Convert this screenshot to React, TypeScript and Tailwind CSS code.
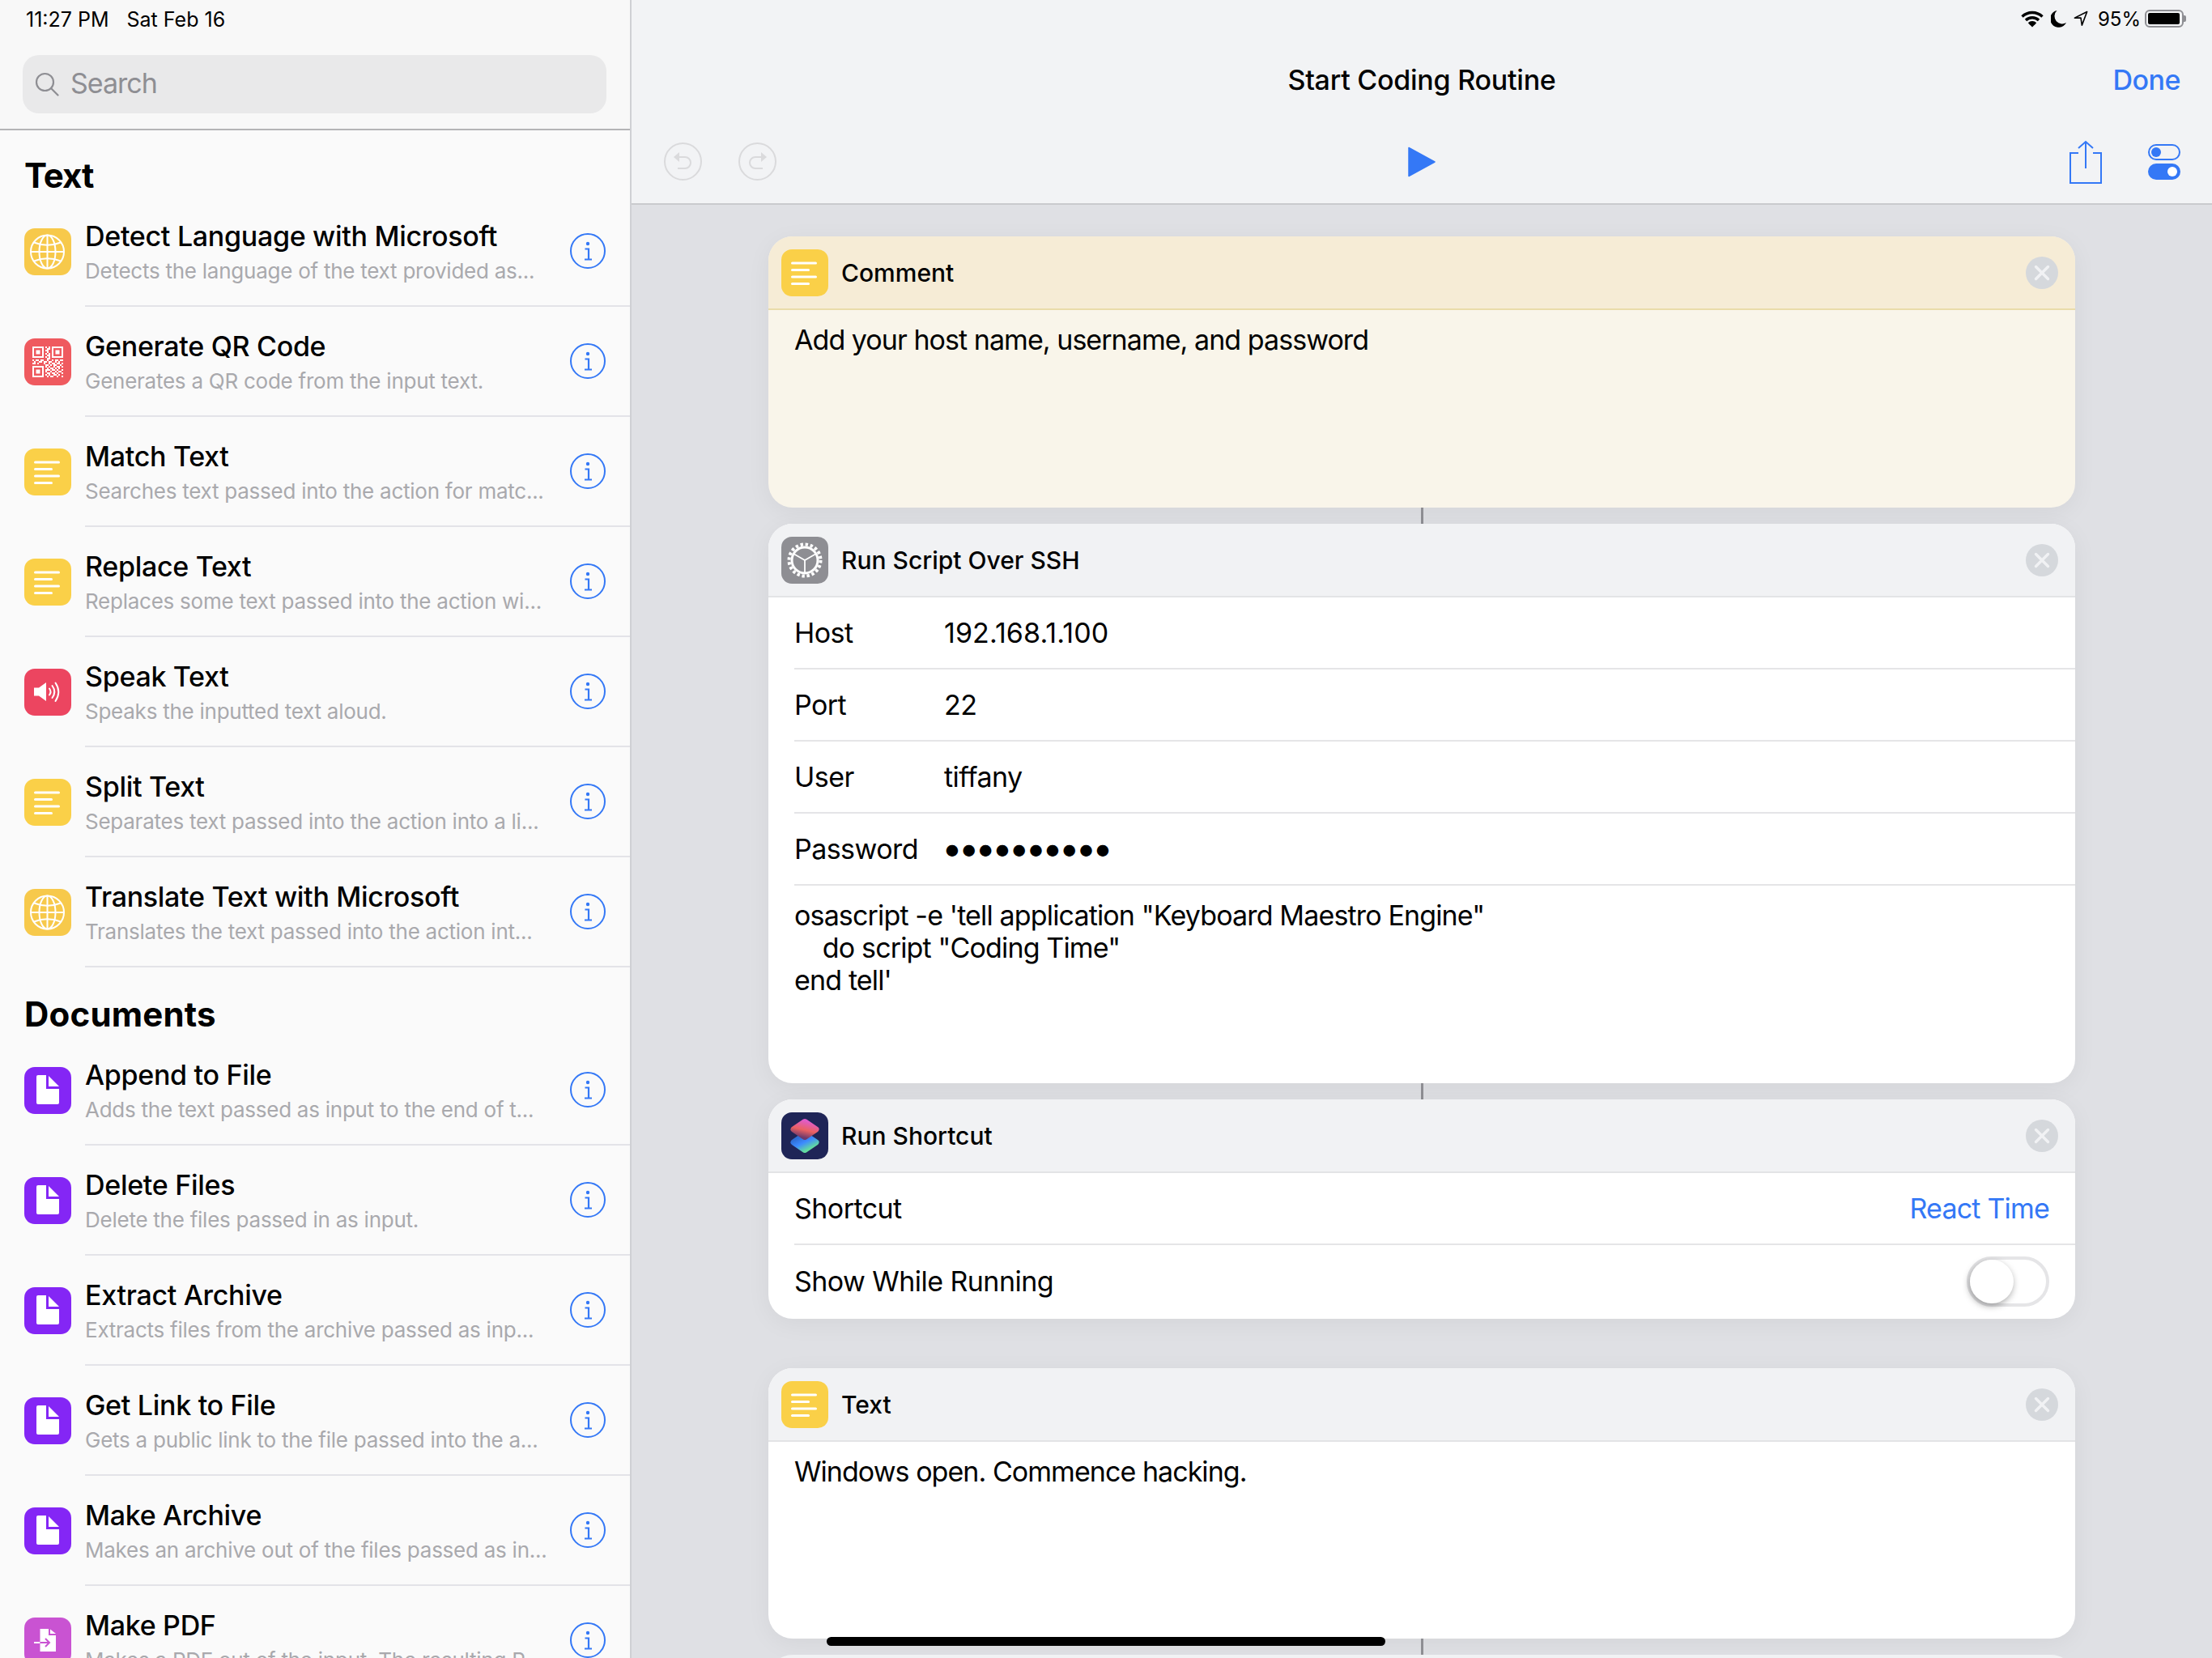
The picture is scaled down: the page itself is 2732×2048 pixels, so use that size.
import React from 'react';

type IconKind = 'globe' | 'qr' | 'lines' | 'speaker' | 'doc' | 'pdf';

const textActions: { title: string; sub: string; icon: IconKind }[] = [
  { title: 'Detect Language with Microsoft', sub: 'Detects the language of the text provided as...', icon: 'globe' },
  { title: 'Generate QR Code', sub: 'Generates a QR code from the input text.', icon: 'qr' },
  { title: 'Match Text', sub: 'Searches text passed into the action for matc...', icon: 'lines' },
  { title: 'Replace Text', sub: 'Replaces some text passed into the action wi...', icon: 'lines' },
  { title: 'Speak Text', sub: 'Speaks the inputted text aloud.', icon: 'speaker' },
  { title: 'Split Text', sub: 'Separates text passed into the action into a li...', icon: 'lines' },
  { title: 'Translate Text with Microsoft', sub: 'Translates the text passed into the action int...', icon: 'globe' },
];

const docActions: { title: string; sub: string; icon: IconKind }[] = [
  { title: 'Append to File', sub: 'Adds the text passed as input to the end of t...', icon: 'doc' },
  { title: 'Delete Files', sub: 'Delete the files passed in as input.', icon: 'doc' },
  { title: 'Extract Archive', sub: 'Extracts files from the archive passed as inp...', icon: 'doc' },
  { title: 'Get Link to File', sub: 'Gets a public link to the file passed into the a...', icon: 'doc' },
  { title: 'Make Archive', sub: 'Makes an archive out of the files passed as in...', icon: 'doc' },
  { title: 'Make PDF', sub: 'Makes a PDF out of the input. The resulting P...', icon: 'pdf' },
];

const qrRows = [
  '0000000010100000000',
  '0000000001100000000',
  '0000000011000000000',
  '0000000001000000000',
  '0000000010100000000',
  '0000000001100000000',
  '0000000010100000000',
  '0000000001100000000',
  '1011011001001011011',
  '0100110110110010100',
  '1101000100101101101',
  '0000000011010110010',
  '0000000010100101101',
  '0000000001011010100',
  '0000000011101101001',
  '0000000010010010110',
  '0000000001101101001',
  '0000000010100110100',
  '0000000001011001001',
];

const Frame: React.FC<{ className: string; children: React.ReactNode }> = ({ className, children }) => (
  <div className={'w-[58px] h-[58px] rounded-[13px] shrink-0 ' + className}>
    <svg viewBox="0 0 58 58" className="w-full h-full block">
      {children}
    </svg>
  </div>
);

const LinesIcon = () => (
  <Frame className="bg-[#fad048]">
    <g stroke="#fff" strokeWidth="3" strokeLinecap="round">
      <path d="M13.500 17H42.500" />
      <path d="M13.500 25.500H33.500" />
      <path d="M13.500 34H42.500" />
      <path d="M13.500 42.500H33.500" />
    </g>
  </Frame>
);

const GlobeIcon = () => (
  <Frame className="bg-[#f7c94b]">
    <g fill="none" stroke="#fff" strokeWidth="2">
      <circle cx="28.500" cy="29" r="20.500" />
      <ellipse cx="28.500" cy="29" rx="10" ry="20.500" />
      <path d="M28.500 8.500V49.500M8 29H49" />
      <path d="M12 17.500Q28.500 24 45 17.500M12 40.500Q28.500 34 45 40.500" />
    </g>
  </Frame>
);

const QrIcon = () => (
  <Frame className="bg-[#ef5a5f]">
    <g fill="#fff">
      {qrRows.map((row, y) =>
        row.split('').map((cell, x) =>
          cell === '0' ? null : <rect key={x + '-' + y} x={10 + x * 2} y={10 + y * 2} width="2" height="2" />
        )
      )}
      <path d="M10 10h14v14H10zM12 12v10h10V12zM34 10h14v14H34zM36 12v10h10V12zM10 34h14v14H10zM12 36v10h10V36z" fillRule="evenodd" />
      <path d="M14.500 14.500h5v5h-5zM38.500 14.500h5v5h-5zM14.500 38.500h5v5h-5z" />
    </g>
  </Frame>
);

const SpeakerIcon = () => (
  <Frame className="bg-[#ec4560]">
    <path d="M12 23.500H18L27 17V40L18 33.500H12Z" fill="#fff" />
    <g fill="none" stroke="#fff" strokeWidth="2" strokeLinecap="round">
      <path d="M31 24.500Q34 28.500 31 32.500" />
      <path d="M34.500 21Q40 28.500 34.500 36" />
      <path d="M38.500 17.500Q46 28.500 38.500 40" />
    </g>
  </Frame>
);

const DocIcon = () => (
  <Frame className="bg-[#8426f5]">
    <path d="M17 10H27V27H43V44a2 2 0 0 1-2 2H17a2 2 0 0 1-2-2V12a2 2 0 0 1 2-2Z" fill="#fff" />
    <path d="M30 11L43 24H30Z" fill="#fff" />
  </Frame>
);

const PdfIcon = () => (
  <Frame className="bg-[#c953d2]">
    <path d="M19.500 14H30V22H39V42H19.500Z" fill="#fff" />
    <path d="M32 14.500L39 20H32Z" fill="#fff" />
    <g fill="none" strokeWidth="2">
      <path d="M12 31H19.500" stroke="#fff" />
      <path d="M19.500 31H31M26 26L31 31L26 36" stroke="#c953d2" />
    </g>
  </Frame>
);

const GearIcon = () => (
  <Frame className="bg-[#8e8e93]">
    <g fill="none" stroke="#fff">
      <circle cx="29" cy="29" r="16" strokeWidth="3" />
      <circle cx="29" cy="29" r="19.500" strokeWidth="4" strokeDasharray="3.400 2.730" />
      <path d="M29 29V44M29 29L16 21.500M29 29L42 21.500" strokeWidth="1.800" />
    </g>
  </Frame>
);

const ShortcutsIcon = () => (
  <Frame className="bg-[#1f2557]">
    <defs>
      <linearGradient id="scLow" x1="0.100" y1="0.300" x2="0.600" y2="1">
        <stop offset="0" stopColor="#2f6fd6" />
        <stop offset="0.450" stopColor="#3d8bff" />
        <stop offset="1" stopColor="#62dba0" />
      </linearGradient>
      <linearGradient id="scTop" x1="0.700" y1="0" x2="0.350" y2="1">
        <stop offset="0" stopColor="#e05cc8" />
        <stop offset="0.550" stopColor="#ea6162" />
        <stop offset="1" stopColor="#6d3a6c" />
      </linearGradient>
    </defs>
    <path d="M29 27.500L43 37L29 46.500L15 37Z" fill="url(#scLow)" stroke="url(#scLow)" strokeWidth="7" strokeLinejoin="round" />
    <path d="M29 11.500L43 21L29 30.500L15 21Z" fill="url(#scTop)" stroke="url(#scTop)" strokeWidth="7" strokeLinejoin="round" />
  </Frame>
);

const icons: Record<IconKind, React.FC> = {
  globe: GlobeIcon,
  qr: QrIcon,
  lines: LinesIcon,
  speaker: SpeakerIcon,
  doc: DocIcon,
  pdf: PdfIcon,
};

const InfoIcon = () => (
  <svg viewBox="0 0 44 44" className="w-[44px] h-[44px] shrink-0 ml-auto mr-[30px]">
    <circle cx="22" cy="22" r="21" fill="none" stroke="#3478f6" strokeWidth="2" />
    <circle cx="22" cy="13" r="2.200" fill="#3478f6" />
    <path d="M18.500 19.500H23V32.500M18 32.500H27" fill="none" stroke="#3478f6" strokeWidth="2.200" />
  </svg>
);

const ActionRow: React.FC<{ title: string; sub: string; icon: IconKind }> = ({ title, sub, icon }) => {
  const Icon = icons[icon];
  return (
    <div className="flex h-[136px] pl-[30px] shrink-0">
      <div className="pt-[39px]">
        <Icon />
      </div>
      <div className="ml-[17px] flex-1 flex items-center border-b-2 border-[#e3e3e8]">
        <div className="self-start pt-[29px] whitespace-nowrap">
          <div className="text-[34px] leading-[40px] font-medium tracking-[-0.3px] text-black">{title}</div>
          <div className="text-[26px] leading-[32px] mt-[7px] tracking-[-0.25px] text-[#a9a9ad]">{sub}</div>
        </div>
        <InfoIcon />
      </div>
    </div>
  );
};

const Sidebar = () => (
  <div className="w-[780px] h-full shrink-0 flex flex-col overflow-hidden bg-[#fafafa] border-r-2 border-[#cfd0d4]">
    <div className="h-[161px] shrink-0 bg-[#f8f8f8] border-b-2 border-[#b4b4b6] flex flex-col">
      <div className="h-[68px] shrink-0 pl-[32px] pt-[9px] flex gap-[22px] text-[25px] leading-[30px] text-black">
        <span>11:27 PM</span>
        <span>Sat Feb 16</span>
      </div>
      <div className="ml-[28px] w-[721px] h-[72px] rounded-[20px] bg-[#e9e9ea] flex items-center pl-[15px]">
        <svg viewBox="0 0 30 30" className="w-[30px] h-[30px]" fill="none" stroke="#8e8e93" strokeWidth="2.200">
          <circle cx="12.500" cy="12.500" r="10.500" />
          <path d="M20 20L28.500 28.500" strokeLinecap="round" />
        </svg>
        <span className="ml-[14px] -mt-[3px] text-[34px] tracking-[-1px] text-[#8e8e93]">Search</span>
      </div>
    </div>
    <div className="h-[82px] shrink-0 pl-[30px] pt-[31px] text-[42px] leading-[50px] font-bold tracking-[-1px] text-black">Text</div>
    {textActions.map((a) => (
      <ActionRow key={a.title} {...a} />
    ))}
    <div className="h-[84px] shrink-0 pl-[30px] pt-[33px] text-[42px] leading-[50px] font-bold tracking-[0.2px] text-black">Documents</div>
    {docActions.map((a) => (
      <ActionRow key={a.title} {...a} />
    ))}
  </div>
);

const StatusIcons = () => (
  <div className="h-[46px] shrink-0 flex justify-end items-start pt-[12px] pr-[32px]">
    <svg viewBox="0 0 28 22" className="w-[28px] h-[22px]" fill="none" stroke="#000" strokeWidth="3.400">
      <path d="M1.500 8.500a18 18 0 0 1 25 0" />
      <path d="M6 13a11.500 11.500 0 0 1 16 0" />
      <path d="M10 17.500a5.500 5.500 0 0 1 8 0" />
      <path d="M14 21.500L10.500 18a5 5 0 0 1 7 0Z" fill="#000" stroke="none" />
    </svg>
    <svg viewBox="0 0 20 22" className="w-[20px] h-[22px] ml-[9px]">
      <path d="M7.500 1A10.500 10.500 0 1 0 19 16 A9.500 9.500 0 0 1 7.500 1Z" fill="#000" />
    </svg>
    <svg viewBox="0 0 20 22" className="w-[18px] h-[20px] ml-[8px] mt-[1px]" fill="none" stroke="#000" strokeWidth="1.800" strokeLinejoin="round">
      <path d="M18.500 1.500L1.500 10H10L11.500 20Z" />
    </svg>
    <span className="ml-[12px] text-[24px] leading-[24px] text-black">95%</span>
    <div className="ml-[5px] flex items-center">
      <div className="w-[48px] h-[22px] rounded-[6px] border-2 border-[#8e8e93] p-[2px]">
        <div className="w-[39px] h-full rounded-[2px] bg-black" />
      </div>
      <div className="w-[3px] h-[8px] rounded-r-[2px] bg-[#8e8e93]" />
    </div>
  </div>
);

const CloseButton = () => (
  <div className="w-[40px] h-[40px] rounded-full bg-[#d5d8dc] flex items-center justify-center shrink-0 ml-auto mr-[21px]">
    <svg viewBox="0 0 20 20" className="w-[20px] h-[20px]" stroke="#f1f2f4" strokeWidth="3.400" strokeLinecap="round">
      <path d="M2.500 2.500L17.500 17.500M17.500 2.500L2.500 17.500" />
    </svg>
  </div>
);

const Card: React.FC<{
  title: string;
  icon: React.ReactNode;
  comment?: boolean;
  height: string;
  children?: React.ReactNode;
}> = ({ title, icon, comment, height, children }) => (
  <div
    className={
      'w-[1614px] shrink-0 rounded-[30px] overflow-hidden shadow-[0_6px_30px_rgba(0,0,0,0.05)] ' +
      height +
      (comment ? ' bg-[#f9f5ea]' : ' bg-white')
    }
  >
    <div
      className={
        'h-[91px] flex items-center pl-[16px] border-b-2 ' +
        (comment ? 'bg-[#f6ecd6] border-[#eadcaa]' : 'bg-[#f1f2f4] border-[#e3e4e6]')
      }
    >
      {icon}
      <span className="ml-[16px] mt-[2px] text-[30px] font-medium text-black">{title}</span>
      <CloseButton />
    </div>
    {children}
  </div>
);

const FieldRow: React.FC<{ label: string; last?: boolean; children: React.ReactNode }> = ({ label, last, children }) => (
  <div className="pl-[32px]">
    <div className={'flex items-center text-[34px] tracking-[-0.55px] whitespace-nowrap text-black h-[89px] ' + (last ? '' : 'border-b-2 border-[#e5e5e7]')}>
      <span className="w-[185px] shrink-0">{label}</span>
      {children}
    </div>
  </div>
);

const Connector = () => <div className="w-[3px] h-[20px] bg-[#8e8e93] shrink-0" />;

const Editor = () => (
  <div className="flex-1 h-full flex flex-col bg-[#dfe0e4] overflow-hidden">
    <div className="h-[253px] shrink-0 bg-[#f2f3f5] border-b-2 border-[#c9cacd] flex flex-col">
      <StatusIcons />
      <div className="h-[104px] shrink-0 grid grid-cols-3 items-center">
        <div />
        <div className="text-center text-[34px] font-medium tracking-[-0.25px] text-black whitespace-nowrap">Start Coding Routine</div>
        <div className="text-right pr-[39px] text-[34px] font-medium tracking-[-0.5px] text-[#3478f6]">Done</div>
      </div>
      <div className="flex-1 grid grid-cols-3 items-center pb-[2px]">
        <div className="flex gap-[45px] pl-[40px]">
          <svg viewBox="0 0 47 47" className="w-[47px] h-[47px]" fill="none" stroke="#dadadc" strokeWidth="2">
            <circle cx="23.500" cy="23.500" r="22.500" />
            <path d="M17 18H26a7 7 0 0 1 0 14H17" />
            <path d="M12 18L19 12V24Z" fill="#dadadc" stroke="none" />
          </svg>
          <svg viewBox="0 0 47 47" className="w-[47px] h-[47px]" fill="none" stroke="#dadadc" strokeWidth="2">
            <circle cx="23.500" cy="23.500" r="22.500" />
            <path d="M30 18H21a7 7 0 0 0 0 14H30" />
            <path d="M35 18L28 12V24Z" fill="#dadadc" stroke="none" />
          </svg>
        </div>
        <div className="flex justify-center">
          <svg viewBox="0 0 34 38" className="w-[34px] h-[38px]">
            <path d="M1 1.500L33 19L1 36.500Z" fill="#3478f6" stroke="#3478f6" strokeWidth="1.500" strokeLinejoin="round" />
          </svg>
        </div>
        <div className="flex justify-end items-center gap-[57px] pr-[39px]">
          <svg viewBox="0 0 40 54" className="w-[40px] h-[54px]" fill="none" stroke="#3478f6" strokeWidth="2">
            <path d="M11 16H1V53H39V16H29" />
            <path d="M20 2V35M11 10L20 2L29 10" />
          </svg>
          <svg viewBox="0 0 40 44" className="w-[40px] h-[44px]">
            <rect x="1" y="1" width="38" height="18" rx="9" fill="none" stroke="#3478f6" strokeWidth="2" />
            <circle cx="10" cy="10" r="6" fill="#3478f6" />
            <rect x="0" y="24" width="40" height="20" rx="10" fill="#3478f6" />
            <circle cx="30" cy="34" r="6" fill="#fff" />
          </svg>
        </div>
      </div>
    </div>
    <div className="flex flex-col items-center pt-[39px]">
      <Card title="Comment" icon={<LinesIcon />} comment height="h-[335px]">
        <div className="pl-[32px] pt-[17px] text-[34px] leading-[40px] tracking-[-0.95px] text-black">Add your host name, username, and password</div>
      </Card>
      <Connector />
      <Card title="Run Script Over SSH" icon={<GearIcon />} height="h-[691px]">
        <FieldRow label="Host">
          <span className="tracking-[0.1px]">192.168.1.100</span>
        </FieldRow>
        <FieldRow label="Port">
          <span className="tracking-[-0.5px]">22</span>
        </FieldRow>
        <FieldRow label="User">
          <span>tiffany</span>
        </FieldRow>
        <FieldRow label="Password">
          <span className="text-[46px] leading-[40px] tracking-[-5.200px] -ml-[3px] -mt-[4px]">••••••••••</span>
        </FieldRow>
        <div className="pl-[32px] pt-[17px] text-[34px] leading-[40px] tracking-[-0.85px] text-black whitespace-pre">
          {'osascript -e \'tell application "Keyboard Maestro Engine"\n    do script "Coding Time"\nend tell\''}
        </div>
      </Card>
      <Connector />
      <Card title="Run Shortcut" icon={<ShortcutsIcon />} height="h-[271px]">
        <FieldRow label="Shortcut">
          <span className="ml-auto mr-[32px] tracking-[-0.8px] text-[#3478f6]">React Time</span>
        </FieldRow>
        <FieldRow label="Show While Running" last>
          <span />
          <div className="ml-auto mr-[32px] w-[102px] h-[62px] shrink-0 rounded-full border-[4px] border-[#e5e5e7] bg-white flex items-center">
            <div className="w-[54px] h-[54px] rounded-full bg-white shadow-[-1px_3px_8px_rgba(0,0,0,0.35)]" />
          </div>
        </FieldRow>
      </Card>
      <div className="h-[61px] shrink-0" />
      <Card title="Text" icon={<LinesIcon />} height="h-[334px]">
        <div className="pl-[32px] pt-[17px] text-[34px] leading-[40px] tracking-[-0.95px] text-black">Windows open. Commence hacking.</div>
      </Card>
      <Connector />
      <div className="w-[1614px] h-[30px] shrink-0 rounded-t-[30px] bg-[#f1f2f4]" />
    </div>
  </div>
);

export default function App() {
  return (
    <div className="relative w-[2732px] h-[2048px] flex overflow-hidden font-[Inter,sans-serif]">
      <Sidebar />
      <Editor />
      {/* home indicator */}
      <div className="absolute left-[1021px] top-[2022px] w-[690px] h-[11px] rounded-full bg-black" />
    </div>
  );
}
